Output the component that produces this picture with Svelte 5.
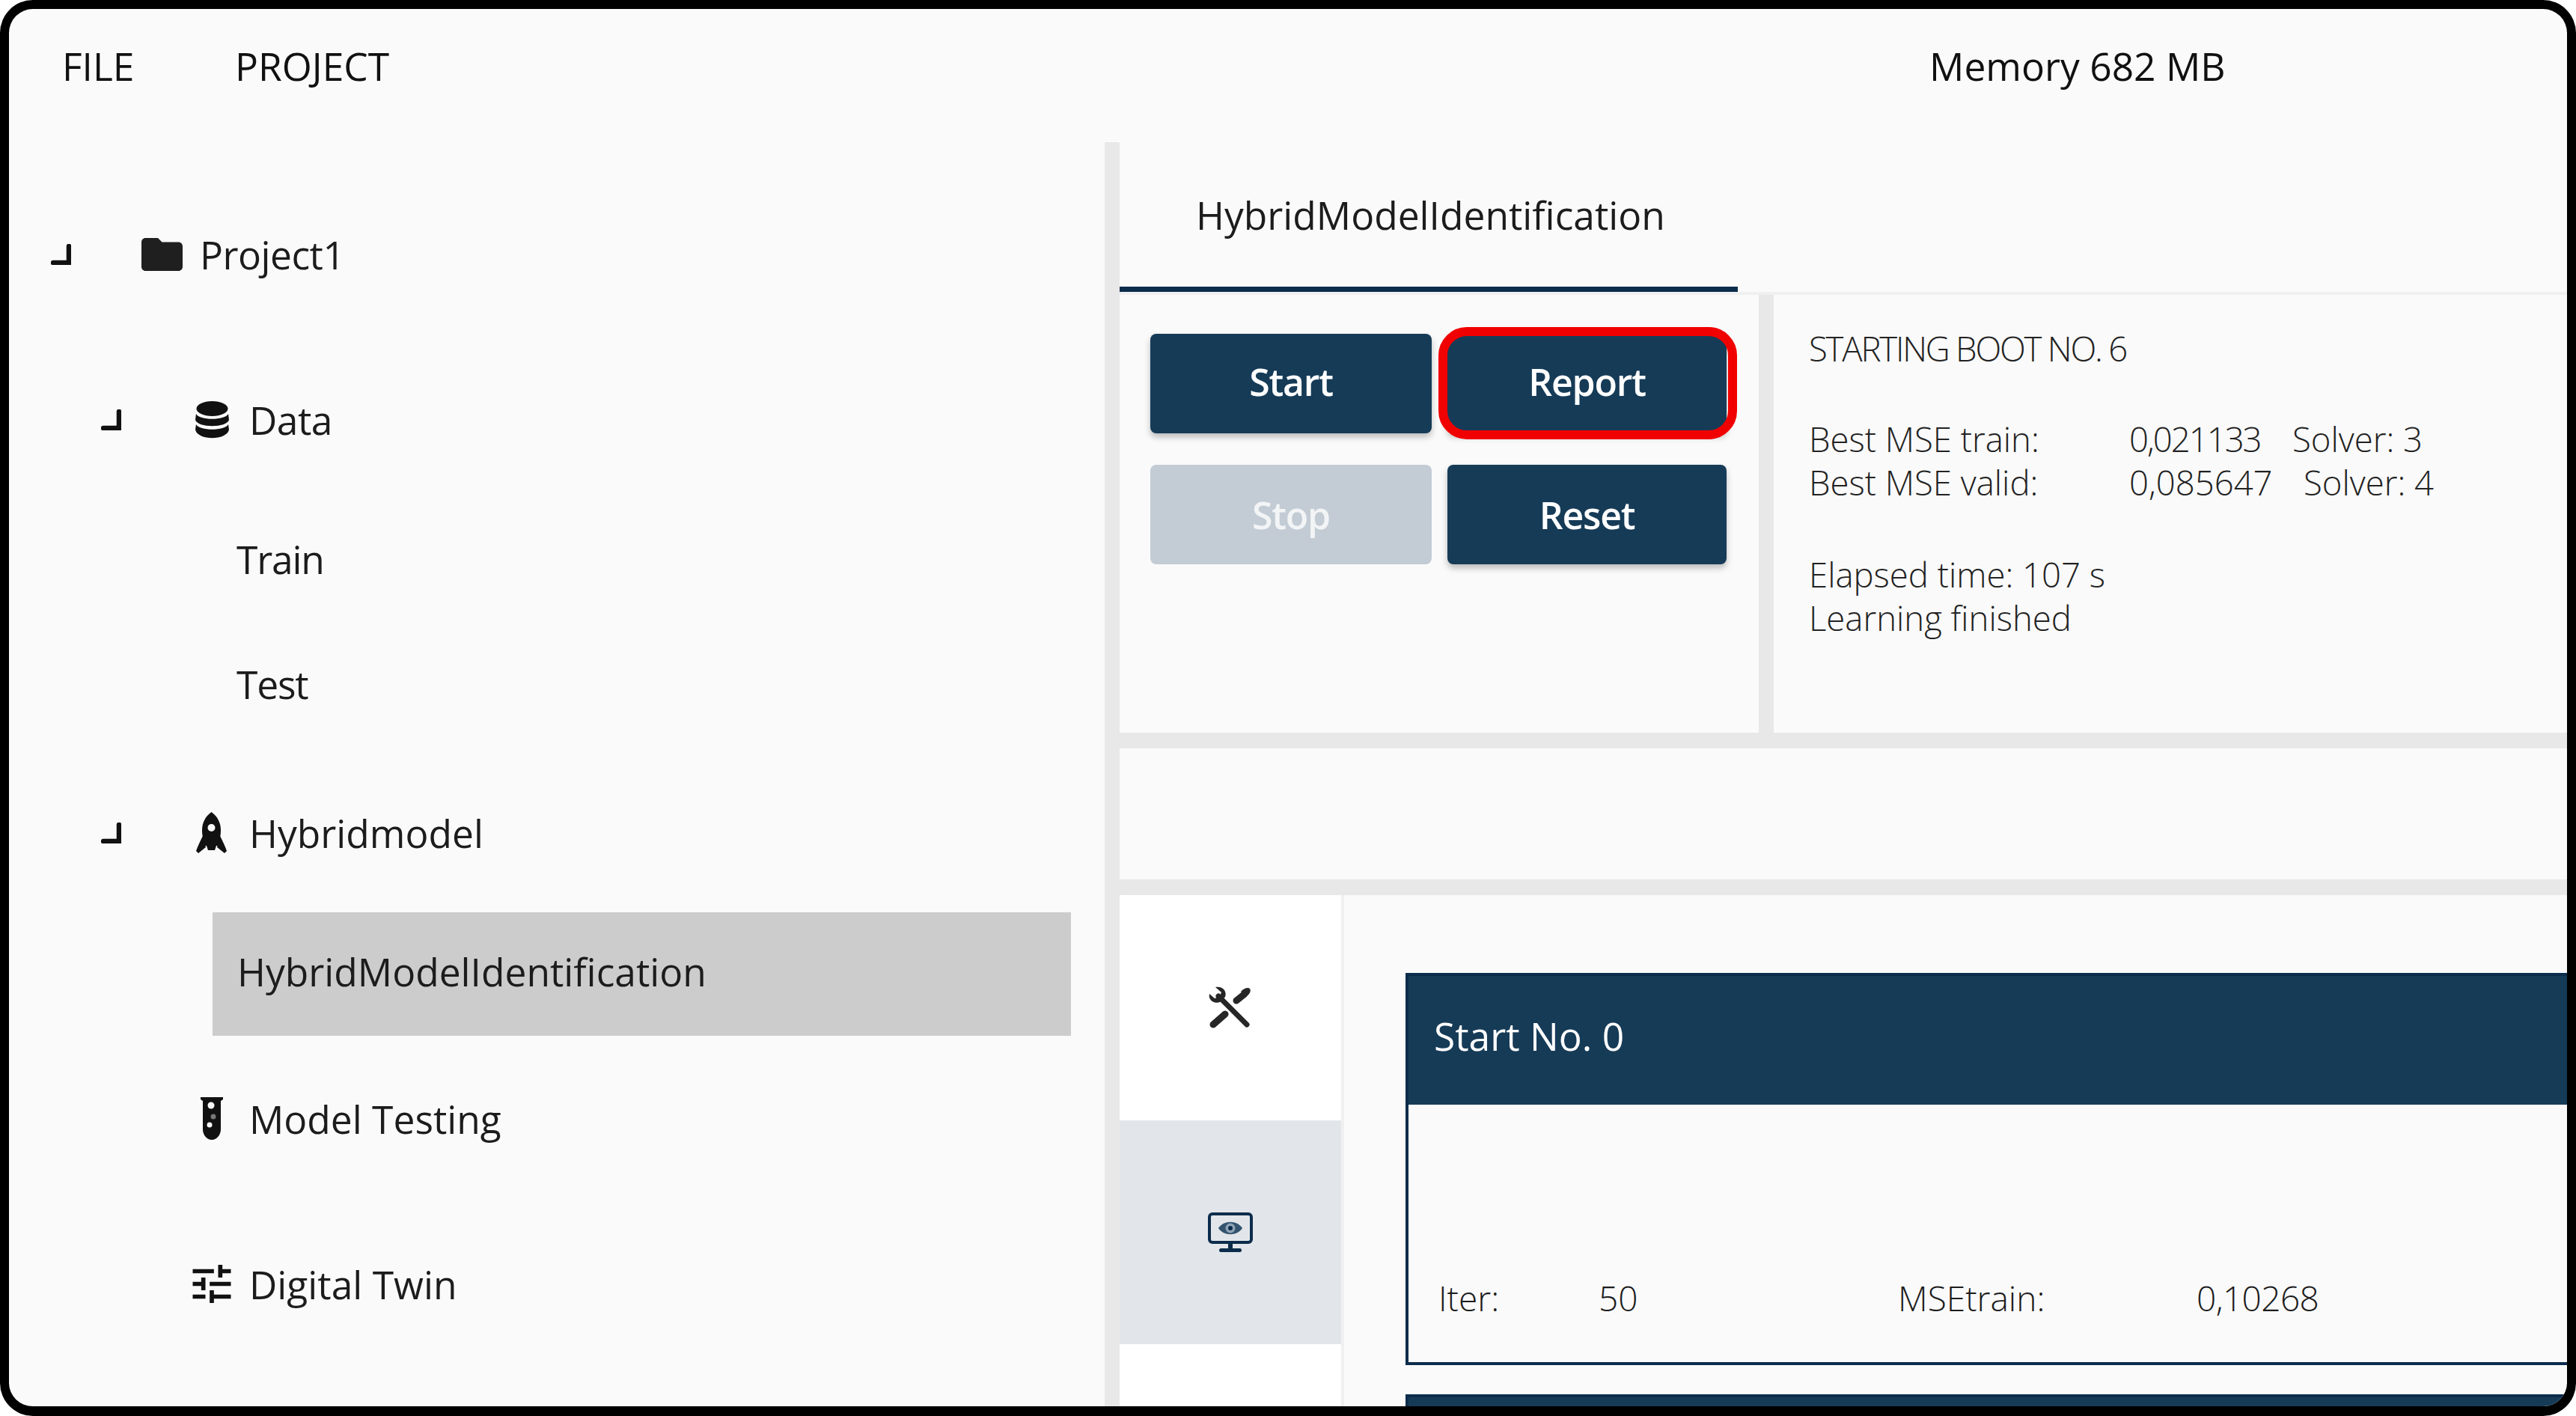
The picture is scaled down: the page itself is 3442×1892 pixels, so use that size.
<script>
  const cards = [{ title: 'Start No. 0', iter: '50', mse: '0,10268' }];
</script>

<div class="frame">
  <header class="topbar">
    <nav class="menu"><span class="file">FILE</span><span>PROJECT</span></nav>
    <span class="memory">Memory 682 MB</span>
  </header>

  <div class="body">
    <aside class="sidebar">
      <div class="row project d0">
        <svg class="caret" viewBox="0 0 27 28"><path d="M3 25H24V3" /></svg>
        <svg class="ic-folder" viewBox="2 4 20 16"><path d="M10 4H4c-1.1 0-1.99.9-1.99 2L2 18c0 1.1.9 2 2 2h16c1.1 0 2-.9 2-2V8c0-1.1-.9-2-2-2h-8l-2-2z" /></svg>
        <span class="tight">Project1</span>
      </div>
      <div class="row data d1">
        <svg class="caret" viewBox="0 0 27 28"><path d="M3 25H24V3" /></svg>
        <svg class="ic-data" viewBox="0 0 47 50">
          <ellipse cx="23.5" cy="10" rx="21" ry="10" />
          <path d="M2 17C6 26 41 26 45 17L46 25C43 36 4 36 1 25Z" />
          <path d="M2 31C6 40 41 40 45 31L46 38C43 53 4 53 1 38Z" />
        </svg>
        <span class="tight">Data</span>
      </div>
      <div class="row train leaf">Train</div>
      <div class="row test leaf">Test</div>
      <div class="row hybrid d1">
        <svg class="caret" viewBox="0 0 27 28"><path d="M3 25H24V3" /></svg>
        <svg class="ic-rocket" viewBox="0 0 41 55">
          <path d="M20.5 0C29 6 33 15 33 24C33 32 31 40 29 45H12C10 40 8 32 8 24C8 15 12 6 20.5 0Z" />
          <path d="M9 32C6 38 2 46 0 52L3 55L13 47Z" />
          <path d="M32 32C35 38 39 46 41 52L38 55L28 47Z" />
          <path d="M14 45H27L25 51H16Z" />
          <circle class="hole" cx="20.5" cy="21" r="5" />
        </svg>
        <span>Hybridmodel</span>
      </div>
      <div class="row selected">HybridModelIdentification</div>
      <div class="row testing d1">
        <span></span>
        <svg class="ic-tube" viewBox="0 0 30 57">
          <path d="M0 0H30V3L27 5V43C27 51 21 57 15 57C9 57 3 51 3 43V5L0 3Z" />
          <circle class="hole" cx="14" cy="11" r="4.5" />
          <circle class="dim" cx="17" cy="26" r="3.5" />
          <circle class="hole" cx="12" cy="37" r="3.5" />
        </svg>
        <span>Model Testing</span>
      </div>
      <div class="row twin d1">
        <span></span>
        <svg class="ic-tune" viewBox="3 3 18 18"><path d="M3 17v2h6v-2H3zM3 5v2h10V5H3zm10 16v-2h8v-2h-8v-2h-2v6h2zM7 9v2H3v2h4v2h2V9H7zm14 4v-2H11v2h10zm-6-4h2V7h4V5h-4V3h-2v6z" /></svg>
        <span>Digital Twin</span>
      </div>
    </aside>

    <main class="main">
      <div class="tabs"><div class="tab">HybridModelIdentification</div></div>

      <section class="controls">
        <div class="buttons">
          <button>Start</button>
          <button class="report">Report</button>
          <button class="off" disabled>Stop</button>
          <button>Reset</button>
        </div>
        <div class="log">
          <div class="caps">STARTING BOOT NO. 6</div>
          <div class="gap"><span class="lab">Best MSE train:</span><span class="val narrow">0,021133</span><span>Solver: 3</span></div>
          <div><span class="lab">Best MSE valid:</span><span class="val wide">0,085647</span><span>Solver: 4</span></div>
          <div class="gap2">Elapsed time: 107 s</div>
          <div>Learning finished</div>
        </div>
      </section>

      <div class="band"></div>

      <section class="lower">
        <div class="rail">
          <div class="rail-item first">
            <svg class="ic-tools" viewBox="0 0 60 60">
              <path class="wrench" d="M14 14L52 52" />
              <path class="head" d="M2 11C0 19 8 25 16 22L23 15C26 7 19 0 10 2L18 9L15 15L9 17Z" />
              <path class="driver" d="M38 20L48 12" />
              <path class="tip" d="M44 8C48 3 54 2 56 4C58 7 56 11 51 15Z" />
              <path class="driver" d="M7 52L23 38" />
            </svg>
          </div>
          <div class="rail-item active">
            <svg class="ic-monitor" viewBox="0 0 60 54">
              <rect class="screen" x="2" y="2" width="56" height="38" rx="4" />
              <rect class="solid" x="27" y="40" width="6" height="9" />
              <rect class="solid" x="15" y="48" width="30" height="5" rx="2.5" />
              <path class="eye" d="M14 21C21 10 39 10 46 21C39 32 21 32 14 21Z" />
              <circle class="iris" cx="30" cy="21" r="6.5" />
              <circle class="solid" cx="30" cy="21" r="3" />
            </svg>
          </div>
        </div>

        <div class="cards">
          {#each cards as c}
            <article class="card">
              <h3>{c.title}</h3>
              <div class="card-body">
                <span class="c-iter">Iter:</span><span class="c-num">{c.iter}</span><span class="c-mse">MSEtrain:</span><span class="c-val">{c.mse}</span>
              </div>
            </article>
          {/each}
          <article class="card next"><h3></h3></article>
        </div>
      </section>
    </main>
  </div>
</div>

<style>
  :global(body) { margin: 0; background: #fff; }

  .frame {
    box-sizing: border-box;
    width: 3442px;
    height: 1892px;
    border: 12px solid #000;
    border-bottom-width: 13px;
    border-radius: 44px;
    overflow: hidden;
    background: #fafafa;
    color: #1c1c1c;
    font-family: "Open Sans", "Noto Sans", sans-serif;
    font-size: 51.5px;
    display: flex;
    flex-direction: column;
  }

  .topbar {
    flex: 0 0 178px;
    display: flex;
    padding: 0 0 27px 71px;
    box-sizing: border-box;
    align-items: center;
    color: #111;
  }
  .menu { display: flex; }
  .file { width: 231px; }
  .memory { margin-left: 2058px; }

  .body { flex: 1; display: flex; min-height: 0; }

  .sidebar {
    box-sizing: border-box;
    flex: 0 0 1484px;
    border-right: 20px solid #e8e8e8;
    padding-top: 71px;
  }

  .row { height: 165px; display: flex; align-items: center; box-sizing: border-box; padding-bottom: 8px; }
  .d0, .d1 { display: grid; align-items: center; }
  .d0 { grid-template-columns: 121px 78px auto; padding-left: 56px; }
  .d1 { grid-template-columns: 122px 76px auto; padding-left: 123px; }
  .tight { letter-spacing: -0.5px; }
  .leaf { padding-left: 304px; letter-spacing: -1.2px; }
  .data { margin-top: 56px; }
  .train { margin-top: 21px; }
  .test { margin-top: 2px; }
  .hybrid { margin-top: 34px; }
  .selected {
    margin: 20px 0 0 272px;
    width: 1147px;
    padding-left: 33px;
    background: #ccc;
  }
  .testing { margin-top: 32px; }
  .twin { margin-top: 56px; }

  svg { display: block; fill: #111; }
  .caret { width: 27px; height: 28px; fill: none; stroke: #111; stroke-width: 6.5; stroke-linecap: round; stroke-linejoin: miter; }
  .ic-folder { width: 55px; height: 44px; fill: #1f1f1f; }
  .ic-data { width: 47px; height: 50px; margin-left: 3px; }
  .ic-rocket { width: 41px; height: 55px; margin-left: 5px; }
  .ic-tube { width: 30px; height: 57px; margin-left: 11px; }
  .ic-tune { width: 52px; height: 51px; }
  .hole { fill: #fafafa; }
  .dim { fill: #777; }

  .main { flex: 1; min-width: 0; display: flex; flex-direction: column; }

  .tabs { flex: 0 0 200px; display: flex; border-bottom: 4px solid #f0f0f0; box-sizing: border-box; }
  .tab {
    box-sizing: border-box;
    width: 826px;
    height: 200px;
    padding: 0 0 0 102px;
    display: flex;
    align-items: center;
    border-bottom: 7px solid #0c2c4c;
  }

  .controls { flex: 0 0 585px; display: flex; border-bottom: 21px solid #e8e8e8; }
  .buttons {
    box-sizing: border-box;
    flex: 0 0 874px;
    border-right: 20px solid #e8e8e8;
    padding: 52px 0 0 41px;
    display: grid;
    grid-template-columns: 376px 373px;
    grid-template-rows: 133px 133px;
    gap: 42px 21px;
    align-content: start;
  }
  button {
    position: relative;
    border: 0;
    padding: 0;
    border-radius: 8px;
    background: #163b57;
    color: #fff;
    font: 600 50px "Open Sans", "Noto Sans", sans-serif;
    letter-spacing: -1.2px;
    box-shadow: 0 5px 9px rgba(0, 0, 0, 0.25);
  }
  button:nth-child(-n + 2) { padding-bottom: 6px; }
  button.off { background: #c3ccd4; color: #f2f4f6; box-shadow: none; }
  .report::after {
    content: "";
    position: absolute;
    inset: -9px -14px -8px -12px;
    border: 12.5px solid #f00000;
    border-radius: 38px;
  }

  .log { padding: 42px 0 0 47px; line-height: 58px; font-weight: 300; font-size: 45.5px; color: #222; }
  .log > div { white-space: nowrap; }
  .caps { letter-spacing: -2.2px; }
  .gap { margin-top: 63px; }
  .gap2 { margin-top: 65px; }
  .lab { display: inline-block; width: 428px; }
  .val { display: inline-block; width: 218px; }
  .val.narrow { letter-spacing: -2px; }
  .val.wide { width: 233px; }

  .band { flex: 0 0 175px; border-bottom: 21px solid #e8e8e8; }

  .lower { flex: 1; display: flex; min-height: 0; }
  .rail { flex: 0 0 296px; background: #fff; border-right: 4px solid #f0f0f0; }
  .rail-item { display: flex; align-items: center; justify-content: center; }
  .first { height: 301px; }
  .active { height: 299px; background: #e2e6ea; }
  .ic-tools { width: 60px; height: 60px; fill: #262626; }
  .wrench, .driver { fill: none; stroke: #262626; stroke-linecap: round; }
  .wrench { stroke-width: 7; }
  .driver { stroke-width: 9; }
  .ic-monitor { width: 60px; height: 54px; fill: #0c2c4c; }
  .screen { fill: none; stroke: #0c2c4c; stroke-width: 4; }
  .eye { fill: #34536e; }
  .iris { fill: #8fa3b5; }
  .solid { fill: #0c2c4c; }

  .cards { flex: 1; min-width: 0; padding: 104px 0 0 82px; }
  .card { border: 4px solid #0c2c4c; border-right: 0; height: 524px; box-sizing: border-box; }
  .card h3 {
    box-sizing: border-box;
    margin: 0;
    height: 172px;
    padding: 0 0 12px 34px;
    display: flex;
    align-items: center;
    background: #163b57;
    color: #fff;
    font-size: 51.5px;
    font-weight: 500;
  }
  .card-body {
    box-sizing: border-box;
    height: 344px;
    padding: 0 0 55px 40px;
    display: flex;
    align-items: flex-end;
    font-size: 46px;
    font-weight: 300;
  }
  .c-iter { width: 214px; }
  .c-num { width: 400px; }
  .c-mse { width: 399px; }
  .c-val { letter-spacing: -0.6px; }
  .next { margin-top: 39px; height: 20px; }
  .next h3 { height: 16px; }
</style>
